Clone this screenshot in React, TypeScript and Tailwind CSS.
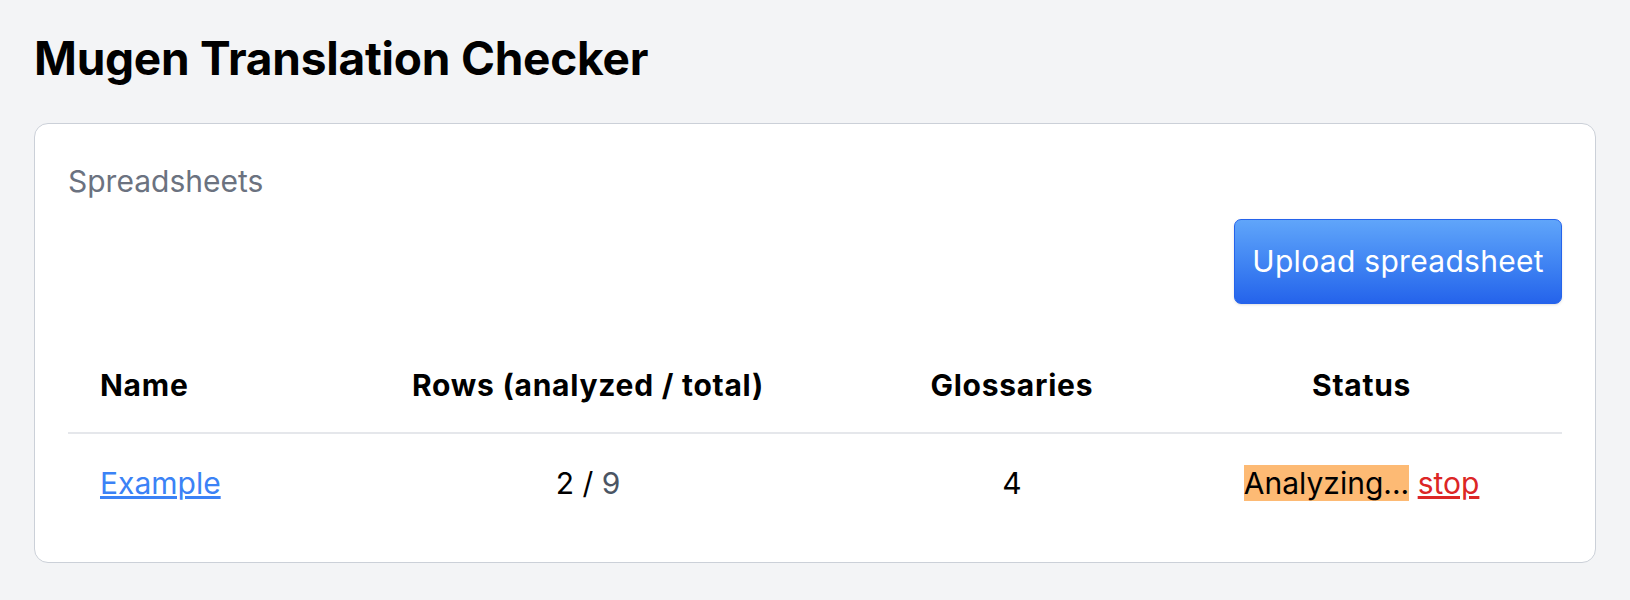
import React from 'react';

interface Sheet {
  name: string;
  analyzed: number;
  total: number;
  glossaries: number;
}

const sheets: Sheet[] = [{ name: 'Example', analyzed: 2, total: 9, glossaries: 4 }];

export default function App() {
  return (
    <div className="min-h-screen bg-[#f3f4f6] px-[34px] pt-[31px] font-['Inter','Liberation_Sans',sans-serif] text-black">
      <h1 className="text-[46px] font-bold leading-[55px] tracking-[-0.005em]">Mugen Translation Checker</h1>

      {/* Spreadsheets card */}
      <section className="mt-[37px] rounded-[14px] border-[1.5px] border-[#cbd0d8] bg-white px-[33px] pt-[39px] pb-[30px]">
        <h2 className="text-[30px] leading-[36px] text-[#6b7280]">Spreadsheets</h2>

        <div className="mt-[20px] flex justify-end">
          <button className="h-[85px] rounded-[7px] border border-[#2563eb] bg-gradient-to-b from-[#60a5fa] to-[#2563eb] px-[17px] text-[30px] tracking-[0.01em] text-white shadow-sm">
            Upload spreadsheet
          </button>
        </div>

        <table className="mt-[34px] w-full table-fixed border-collapse text-[30px] leading-[42px]">
          <thead>
            <tr className="border-b-2 border-[#e5e7eb] tracking-[0.025em]">
              <th className="w-[245px] py-[26px] pl-[32px] text-left font-bold">Name</th>
              <th className="w-[548px] py-[26px] text-center font-bold">Rows (analyzed / total)</th>
              <th className="w-[298px] py-[26px] text-center font-bold">Glossaries</th>
              <th className="w-[400px] py-[26px] text-center font-bold">Status</th>
            </tr>
          </thead>
          <tbody>
            {sheets.map((s) => (
              <tr key={s.name}>
                <td className="py-[28px] pl-[32px]">
                  <a href="#" className="text-[#3b82f6] underline">
                    {s.name}
                  </a>
                </td>
                <td className="py-[28px] text-center">
                  {s.analyzed} / <span className="text-[#4b5563]">{s.total}</span>
                </td>
                <td className="py-[28px] text-center">{s.glossaries}</td>
                <td className="py-[28px] text-center">
                  <span className="bg-[#fdba74]">Analyzing...</span>{' '}
                  <a href="#" className="text-[#dc2626] underline">
                    stop
                  </a>
                </td>
              </tr>
            ))}
          </tbody>
        </table>
      </section>
    </div>
  );
}
